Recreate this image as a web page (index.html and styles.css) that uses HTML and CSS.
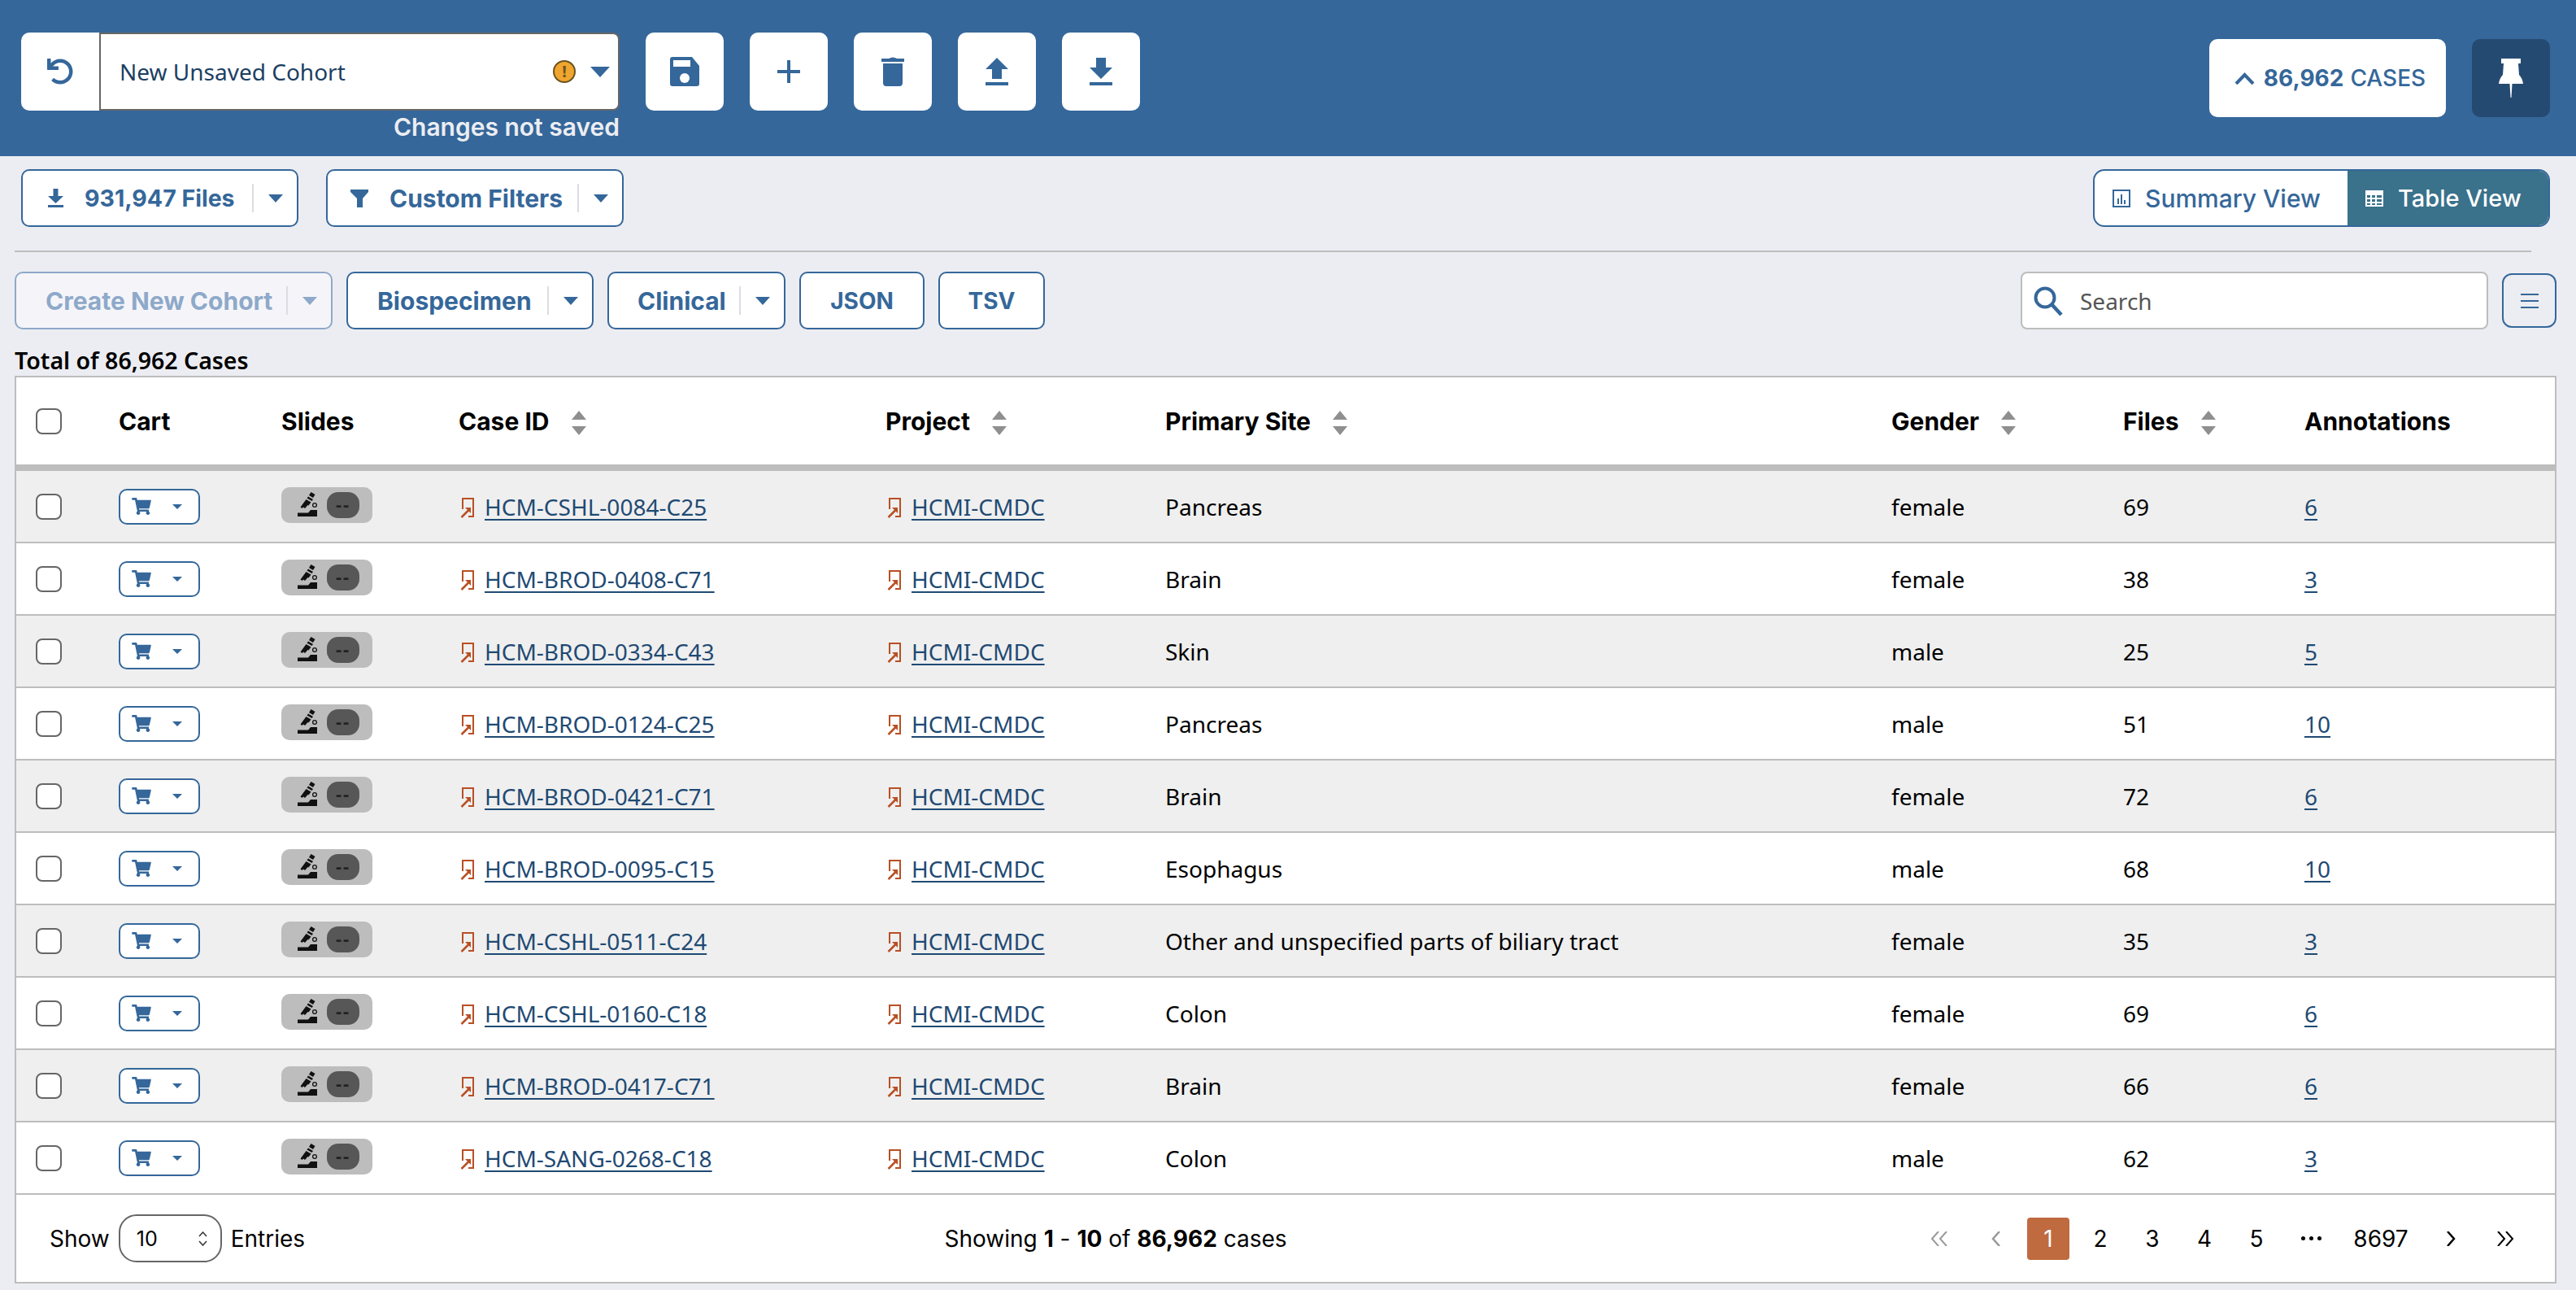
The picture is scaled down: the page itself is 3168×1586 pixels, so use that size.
FILE: index.html
```html
<!doctype html>
<html>
<head>
	<meta charset="utf-8">
	<title>Cohort Case Table</title>
	<link rel="stylesheet" href="styles.css">
</head>
<body>

<svg class="defs" width="0" height="0">
	<symbol id="i-cart" viewBox="0 0 576 512"><path d="M528.12 301.319l47.273-208C578.806 78.301 567.391 64 551.99 64H159.208l-9.166-44.81C147.758 8.021 137.93 0 126.529 0H24C10.745 0 0 10.745 0 24v16c0 13.255 10.745 24 24 24h69.883l70.248 343.435C147.325 417.1 136 435.222 136 456c0 30.928 25.072 56 56 56s56-25.072 56-56c0-15.674-6.447-29.835-16.824-40h209.647C430.447 426.165 424 440.326 424 456c0 30.928 25.072 56 56 56s56-25.072 56-56c0-22.172-12.888-41.332-31.579-50.405l5.517-24.276c3.413-15.018-8.002-29.319-23.403-29.319H218.117l-6.545-32h293.145c11.206 0 20.92-7.754 23.403-18.681z"/></symbol>
	<symbol id="i-scope" viewBox="0 0 24 30">
		<path d="M0 30v-4.500h13l3-3.500h8v8z"/>
		<path d="M3.500 18.500l7-9.500 6 3.500-3 4-1-.5-3.500 4-2-1.500-1.500 1.500z"/>
		<path d="M11.500 7.500l1.500-2 6 3.500-1.500 2z"/>
		<path d="M14 4l2.500-4 5 3-2.500 4z"/>
		<circle cx="21" cy="16" r="2.400" fill="#bdbdbd" stroke="#111" stroke-width="1.300"/>
	</symbol>
	<symbol id="i-link" viewBox="0 0 18 26">
		<path d="M3 15V2h13v22H10" fill="none" stroke="currentColor" stroke-width="2"/>
		<path d="M1.500 25l9.500-9.500" fill="none" stroke="currentColor" stroke-width="2.500"/>
		<path d="M6 13h7v7z"/>
	</symbol>
	<symbol id="i-sort" viewBox="0 0 18 30">
		<path d="M9 0l9 11H0zM0 19h18l-9 11z"/>
	</symbol>
	<symbol id="i-first" viewBox="0 0 22 18"><path d="M10 0L2 9l8 9M20 0l-8 9 8 9" fill="none" stroke="currentColor" stroke-width="2"/></symbol>
	<symbol id="i-prev" viewBox="0 0 12 18"><path d="M10 0L2 9l8 9" fill="none" stroke="currentColor" stroke-width="2.500"/></symbol>
	<symbol id="i-next" viewBox="0 0 12 18"><path d="M2 0l8 9-8 9" fill="none" stroke="currentColor" stroke-width="2.500"/></symbol>
	<symbol id="i-last" viewBox="0 0 22 18"><path d="M2 0l8 9-8 9M12 0l8 9-8 9" fill="none" stroke="currentColor" stroke-width="2"/></symbol>
</svg>

<!--cohort bar start-->
<div class="cohort_bar">
	<button class="tile tile_undo">
		<svg width="32" height="32" viewBox="0 0 512 512"><path d="M212.333 224.333H12c-6.627 0-12-5.373-12-12V12C0 5.373 5.373 0 12 0h48c6.627 0 12 5.373 12 12v78.112C117.773 39.279 184.26 7.47 258.175 8.007c136.906.994 246.448 111.623 246.157 248.532C504.041 393.258 393.12 504 256.333 504c-64.089 0-122.496-24.313-166.51-64.215-5.099-4.622-5.334-12.554-.467-17.42l33.967-33.967c4.474-4.474 11.662-4.717 16.401-.525C170.76 415.336 211.58 432 256.333 432c97.268 0 176-78.716 176-176 0-97.267-78.716-176-176-176-58.496 0-110.28 28.476-142.274 72.333h98.274c6.627 0 12 5.373 12 12v48c0 6.627-5.373 12-12 12z"/></svg>
	</button>
	<div class="cohort_pick">
		<div class="cohort_select">
			<span class="cohort_name">New Unsaved Cohort</span>
			<span class="warn">!</span>
			<span class="caret caret_big"></span>
		</div>
		<div class="cohort_note">Changes not saved</div>
	</div>
	<div class="tile_group">
		<button class="tile">
			<svg width="36" height="36" viewBox="0 0 36 36"><path d="M3 0h24l9 11v22a3 3 0 0 1-3 3H3a3 3 0 0 1-3-3V3a3 3 0 0 1 3-3z"/><rect x="4" y="4" width="21" height="8" fill="#fff"/><circle cx="18" cy="26" r="6" fill="#fff"/></svg>
		</button>
		<button class="tile">
			<svg width="28" height="28" viewBox="0 0 28 28"><path d="M12 0h4v12h12v4H16v12h-4V16H0v-4h12z"/></svg>
		</button>
		<button class="tile">
			<svg width="28" height="36" viewBox="0 0 28 36"><path d="M0 2h9q5-3 10 0h9v4H0zM2 8h24v24a4 4 0 0 1-4 4H6a4 4 0 0 1-4-4z"/></svg>
		</button>
		<button class="tile">
			<svg width="28" height="34" viewBox="0 0 28 34"><path d="M14 0l14 14h-8v12H8V14H0zM0 30h28v4H0z"/></svg>
		</button>
		<button class="tile">
			<svg width="28" height="34" viewBox="0 0 28 34"><path d="M8 0h12v12h8L14 26 0 12h8zM0 30h28v4H0z"/></svg>
		</button>
	</div>
	<div class="bar_right">
		<button class="cases_btn">
			<svg width="25" height="15" viewBox="0 0 25 15"><path d="M2 14L12.500 3 23 14" fill="none" stroke="currentColor" stroke-width="4"/></svg>
			<b>86,962</b> <span>CASES</span>
		</button>
		<button class="pin_btn">
			<svg width="30" height="48" viewBox="0 0 30 48"><path d="M3 0h24v6h-3l1 14q4 4 5 11H16.500L15.500 48H14.500L13.500 31H0q1-7 5-11L6 6H3z"/></svg>
		</button>
	</div>
</div>
<!--end cohort bar-->

<div class="page">

	<div class="view_row">
		<button class="btn w_files">
			<svg class="btn_icon" width="19" height="23" viewBox="0 0 19 23"><path d="M6.500 0h6v9H19l-9.500 9L0 9h6.500zM0 20h19v3H0z"/></svg>
			<span class="btn_label">931,947 Files</span>
			<span class="btn_line"></span>
			<span class="caret_box"><span class="caret"></span></span>
		</button>
		<button class="btn w_filters">
			<svg class="btn_icon" width="22" height="22" viewBox="0 0 22 22"><path d="M0 0h22v3l-7 8v11H8V11L0 3z"/></svg>
			<span class="btn_label">Custom Filters</span>
			<span class="btn_line"></span>
			<span class="caret_box"><span class="caret"></span></span>
		</button>
		<div class="view_switch">
			<div class="view_item">
				<svg width="22" height="22" viewBox="0 0 22 22"><rect x="1" y="1" width="20" height="20" fill="none" stroke="currentColor" stroke-width="2"/><path d="M6 11h2v7H6zM10 6h2v12h-2zM14 13h2v5h-2z"/></svg>
				Summary View
			</div>
			<div class="view_item view_on">
				<svg width="22" height="22" viewBox="0 0 22 22"><path d="M0 1h22v20H0z"/><path d="M2 7h4v3H2zM8 7h4v3H8zM14 7h6v3h-6zM2 12h4v3H2zM8 12h4v3H8zM14 12h6v3h-6zM2 17h4v2H2zM8 17h4v2H8zM14 17h6v2h-6z" fill="#3a718b"/></svg>
				Table View
			</div>
		</div>
	</div>

	<div class="rule"></div>

	<div class="tool_row">
		<button class="btn w_create btn_off">
			<span class="btn_label">Create New Cohort</span>
			<span class="btn_line"></span>
			<span class="caret_box"><span class="caret"></span></span>
		</button>
		<button class="btn w_bio">
			<span class="btn_label">Biospecimen</span>
			<span class="btn_line"></span>
			<span class="caret_box"><span class="caret"></span></span>
		</button>
		<button class="btn w_clin">
			<span class="btn_label">Clinical</span>
			<span class="btn_line"></span>
			<span class="caret_box"><span class="caret"></span></span>
		</button>
		<button class="btn w_json">JSON</button>
		<button class="btn w_tsv">TSV</button>
		<div class="search">
			<svg width="36" height="36" viewBox="0 0 36 36"><circle cx="14" cy="14" r="11.500" fill="none" stroke="currentColor" stroke-width="4"/><path d="M22 22l12 13" fill="none" stroke="currentColor" stroke-width="4.500"/></svg>
			<span>Search</span>
		</div>
		<button class="col_btn">
			<svg width="22" height="18" viewBox="0 0 22 18"><path d="M0 0h22v2H0zM0 8h22v2H0zM0 16h22v2H0z"/></svg>
		</button>
	</div>

	<div class="total">Total of 86,962 Cases</div>

	<!--table start-->
	<div class="grid">
		<table>
			<colgroup>
				<col class="c1"><col class="c2"><col class="c3"><col class="c4"><col class="c5"><col class="c6"><col class="c7"><col class="c8"><col class="c9">
			</colgroup>
			<thead>
				<tr>
					<th><span class="check"></span></th>
					<th>Cart</th>
					<th>Slides</th>
					<th>Case ID <svg class="sort"><use href="#i-sort"/></svg></th>
					<th>Project <svg class="sort"><use href="#i-sort"/></svg></th>
					<th>Primary Site <svg class="sort"><use href="#i-sort"/></svg></th>
					<th>Gender <svg class="sort"><use href="#i-sort"/></svg></th>
					<th>Files <svg class="sort"><use href="#i-sort"/></svg></th>
					<th>Annotations</th>
				</tr>
			</thead>
			<tbody>
				<tr>
					<td><span class="check"></span></td>
					<td><span class="cart"><svg width="24" height="21"><use href="#i-cart"/></svg><span class="caret caret_sm"></span></span></td>
					<td><span class="slides"><svg width="24" height="30"><use href="#i-scope"/></svg><span class="slides_n">--</span></span></td>
					<td><a class="ref"><svg width="18" height="26"><use href="#i-link"/></svg><u>HCM-CSHL-0084-C25</u></a></td>
					<td><a class="ref"><svg width="18" height="26"><use href="#i-link"/></svg><u>HCMI-CMDC</u></a></td>
					<td>Pancreas</td>
					<td>female</td>
					<td>69</td>
					<td><u>6</u></td>
				</tr>
				<tr>
					<td><span class="check"></span></td>
					<td><span class="cart"><svg width="24" height="21"><use href="#i-cart"/></svg><span class="caret caret_sm"></span></span></td>
					<td><span class="slides"><svg width="24" height="30"><use href="#i-scope"/></svg><span class="slides_n">--</span></span></td>
					<td><a class="ref"><svg width="18" height="26"><use href="#i-link"/></svg><u>HCM-BROD-0408-C71</u></a></td>
					<td><a class="ref"><svg width="18" height="26"><use href="#i-link"/></svg><u>HCMI-CMDC</u></a></td>
					<td>Brain</td>
					<td>female</td>
					<td>38</td>
					<td><u>3</u></td>
				</tr>
				<tr>
					<td><span class="check"></span></td>
					<td><span class="cart"><svg width="24" height="21"><use href="#i-cart"/></svg><span class="caret caret_sm"></span></span></td>
					<td><span class="slides"><svg width="24" height="30"><use href="#i-scope"/></svg><span class="slides_n">--</span></span></td>
					<td><a class="ref"><svg width="18" height="26"><use href="#i-link"/></svg><u>HCM-BROD-0334-C43</u></a></td>
					<td><a class="ref"><svg width="18" height="26"><use href="#i-link"/></svg><u>HCMI-CMDC</u></a></td>
					<td>Skin</td>
					<td>male</td>
					<td>25</td>
					<td><u>5</u></td>
				</tr>
				<tr>
					<td><span class="check"></span></td>
					<td><span class="cart"><svg width="24" height="21"><use href="#i-cart"/></svg><span class="caret caret_sm"></span></span></td>
					<td><span class="slides"><svg width="24" height="30"><use href="#i-scope"/></svg><span class="slides_n">--</span></span></td>
					<td><a class="ref"><svg width="18" height="26"><use href="#i-link"/></svg><u>HCM-BROD-0124-C25</u></a></td>
					<td><a class="ref"><svg width="18" height="26"><use href="#i-link"/></svg><u>HCMI-CMDC</u></a></td>
					<td>Pancreas</td>
					<td>male</td>
					<td>51</td>
					<td><u>10</u></td>
				</tr>
				<tr>
					<td><span class="check"></span></td>
					<td><span class="cart"><svg width="24" height="21"><use href="#i-cart"/></svg><span class="caret caret_sm"></span></span></td>
					<td><span class="slides"><svg width="24" height="30"><use href="#i-scope"/></svg><span class="slides_n">--</span></span></td>
					<td><a class="ref"><svg width="18" height="26"><use href="#i-link"/></svg><u>HCM-BROD-0421-C71</u></a></td>
					<td><a class="ref"><svg width="18" height="26"><use href="#i-link"/></svg><u>HCMI-CMDC</u></a></td>
					<td>Brain</td>
					<td>female</td>
					<td>72</td>
					<td><u>6</u></td>
				</tr>
				<tr>
					<td><span class="check"></span></td>
					<td><span class="cart"><svg width="24" height="21"><use href="#i-cart"/></svg><span class="caret caret_sm"></span></span></td>
					<td><span class="slides"><svg width="24" height="30"><use href="#i-scope"/></svg><span class="slides_n">--</span></span></td>
					<td><a class="ref"><svg width="18" height="26"><use href="#i-link"/></svg><u>HCM-BROD-0095-C15</u></a></td>
					<td><a class="ref"><svg width="18" height="26"><use href="#i-link"/></svg><u>HCMI-CMDC</u></a></td>
					<td>Esophagus</td>
					<td>male</td>
					<td>68</td>
					<td><u>10</u></td>
				</tr>
				<tr>
					<td><span class="check"></span></td>
					<td><span class="cart"><svg width="24" height="21"><use href="#i-cart"/></svg><span class="caret caret_sm"></span></span></td>
					<td><span class="slides"><svg width="24" height="30"><use href="#i-scope"/></svg><span class="slides_n">--</span></span></td>
					<td><a class="ref"><svg width="18" height="26"><use href="#i-link"/></svg><u>HCM-CSHL-0511-C24</u></a></td>
					<td><a class="ref"><svg width="18" height="26"><use href="#i-link"/></svg><u>HCMI-CMDC</u></a></td>
					<td>Other and unspecified parts of biliary tract</td>
					<td>female</td>
					<td>35</td>
					<td><u>3</u></td>
				</tr>
				<tr>
					<td><span class="check"></span></td>
					<td><span class="cart"><svg width="24" height="21"><use href="#i-cart"/></svg><span class="caret caret_sm"></span></span></td>
					<td><span class="slides"><svg width="24" height="30"><use href="#i-scope"/></svg><span class="slides_n">--</span></span></td>
					<td><a class="ref"><svg width="18" height="26"><use href="#i-link"/></svg><u>HCM-CSHL-0160-C18</u></a></td>
					<td><a class="ref"><svg width="18" height="26"><use href="#i-link"/></svg><u>HCMI-CMDC</u></a></td>
					<td>Colon</td>
					<td>female</td>
					<td>69</td>
					<td><u>6</u></td>
				</tr>
				<tr>
					<td><span class="check"></span></td>
					<td><span class="cart"><svg width="24" height="21"><use href="#i-cart"/></svg><span class="caret caret_sm"></span></span></td>
					<td><span class="slides"><svg width="24" height="30"><use href="#i-scope"/></svg><span class="slides_n">--</span></span></td>
					<td><a class="ref"><svg width="18" height="26"><use href="#i-link"/></svg><u>HCM-BROD-0417-C71</u></a></td>
					<td><a class="ref"><svg width="18" height="26"><use href="#i-link"/></svg><u>HCMI-CMDC</u></a></td>
					<td>Brain</td>
					<td>female</td>
					<td>66</td>
					<td><u>6</u></td>
				</tr>
				<tr>
					<td><span class="check"></span></td>
					<td><span class="cart"><svg width="24" height="21"><use href="#i-cart"/></svg><span class="caret caret_sm"></span></span></td>
					<td><span class="slides"><svg width="24" height="30"><use href="#i-scope"/></svg><span class="slides_n">--</span></span></td>
					<td><a class="ref"><svg width="18" height="26"><use href="#i-link"/></svg><u>HCM-SANG-0268-C18</u></a></td>
					<td><a class="ref"><svg width="18" height="26"><use href="#i-link"/></svg><u>HCMI-CMDC</u></a></td>
					<td>Colon</td>
					<td>male</td>
					<td>62</td>
					<td><u>3</u></td>
				</tr>
			</tbody>
		</table>

		<div class="grid_foot">
			<div class="entries">
				Show
				<span class="entries_box">10
					<svg width="11" height="18" viewBox="0 0 11 18"><path d="M1 6l4.500-5L10 6M1 12l4.500 5 4.500-5" fill="none" stroke="#333" stroke-width="1.500"/></svg>
				</span>
				Entries
			</div>
			<div class="showing">Showing <b>1</b> - <b>10</b> of <b>86,962</b> cases</div>
			<div class="pager">
				<span class="pg pg_off pg_first"><svg width="22" height="18"><use href="#i-first"/></svg></span>
				<span class="pg pg_off"><svg width="12" height="18"><use href="#i-prev"/></svg></span>
				<span class="pg pg_on">1</span>
				<span class="pg">2</span>
				<span class="pg">3</span>
				<span class="pg">4</span>
				<span class="pg">5</span>
				<span class="pg pg_dots"><svg width="25" height="5" viewBox="0 0 25 5"><circle cx="2.500" cy="2.500" r="2.500"/><circle cx="12.500" cy="2.500" r="2.500"/><circle cx="22.500" cy="2.500" r="2.500"/></svg></span>
				<span class="pg pg_wide">8697</span>
				<span class="pg"><svg width="12" height="18"><use href="#i-next"/></svg></span>
				<span class="pg pg_last"><svg width="22" height="18"><use href="#i-last"/></svg></span>
			</div>
		</div>
	</div>
	<!--end table-->

</div>

</body>
</html>
```

FILE: styles.css
```css
*{margin:0;padding:0;box-sizing:border-box;}
html,body{height:1586px;overflow:hidden;}
body{background:#ecedf2;font-family:"Noto Sans","Open Sans",sans-serif;font-size:28px;color:#000;}
button{font-family:inherit;border:none;background:none;color:inherit;}
svg{fill:currentColor;display:block;flex:none;}
.defs{position:absolute;}

/*cohort bar start*/
.cohort_bar{height:192px;background:#35679a;display:flex;align-items:flex-start;padding:40px 32px 0 26px;}
.tile{width:96px;height:96px;background:#fff;border-radius:10px;display:flex;align-items:center;justify-content:center;color:#35679a;}
.tile_undo{border-radius:10px 0 0 10px;}
.cohort_pick{width:640px;}
.cohort_select{height:96px;background:#fff;border:2px solid #666;border-radius:0 8px 8px 0;display:flex;align-items:center;padding:0 10px 0 23px;color:#1c3f63;}
.cohort_name{flex:1;}
.warn{width:28px;height:28px;border-radius:50%;background:#f0a52e;border:2px solid #6b5420;color:#6b5420;font-size:20px;font-weight:700;line-height:24px;text-align:center;margin-right:18px;}
.cohort_note{font-family:"Inter","Noto Sans",sans-serif;font-weight:600;color:#ecedf2;text-align:right;font-size:30px;line-height:32px;margin-top:4px;}
.tile_group{display:flex;gap:32px;margin-left:32px;}
.bar_right{margin-left:auto;margin-top:8px;display:flex;gap:32px;}
.cases_btn{width:291px;height:96px;background:#fff;border-radius:10px;color:#35679a;display:flex;align-items:center;justify-content:center;gap:11px;padding-left:6px;font-family:"Inter","Noto Sans",sans-serif;font-size:28px;}
.cases_btn b{font-weight:700;}
.cases_btn span{font-weight:500;margin-left:-3px;}
.pin_btn{width:96px;height:96px;background:#254a72;border-radius:10px;color:#fff;display:flex;align-items:center;justify-content:center;}
/*end cohort bar*/

.caret{display:block;width:0;height:0;border-left:9px solid transparent;border-right:9px solid transparent;border-top:10px solid #35679a;}
.caret_big{border-left-width:12px;border-right-width:12px;border-top-width:13px;}
.caret_sm{border-left-width:6px;border-right-width:6px;border-top-width:6px;}

.page{padding:0 24px 0 18px;}

/*buttons*/
.btn{height:71px;background:#fff;border:2.500px solid #35679a;border-radius:10px;color:#35679a;display:flex;align-items:center;font-family:"Inter","Noto Sans",sans-serif;font-weight:700;font-size:30px;justify-content:center;flex:none;}
.btn_label{flex:1;text-align:left;white-space:nowrap;}
.btn_line{width:2px;height:35px;background:#dcdde2;}
.caret_box{width:53px;display:flex;justify-content:center;}
.btn_icon{margin-right:26px;}
.btn_off{background:#f5f5f9;border-color:#8ea9c9;color:#8ea9c9;}
.btn_off .caret{border-top-color:#8ea9c9;}
.w_files{width:341px;padding-left:31px;font-size:28.500px;}
.w_filters{width:366px;padding-left:28px;}
.w_create{width:391px;padding-left:36px;}
.w_bio{width:304px;padding-left:36px;}
.w_clin{width:219px;padding-left:35px;}
.w_json{width:154px;font-size:28px;}
.w_tsv{width:131px;font-size:28px;}

.view_row{display:flex;align-items:center;gap:34px;padding:16px 8px 0;}
.view_switch{margin-left:auto;width:562px;height:71px;display:flex;border:2.500px solid #35679a;border-radius:14px;overflow:hidden;background:#fff;font-family:"Inter","Noto Sans",sans-serif;font-weight:500;font-size:30px;color:#35679a;}
.view_item{display:flex;align-items:center;gap:18px;padding-left:22px;width:311px;}
.view_on{flex:1;background:#3a718b;color:#fff;font-size:29px;}
.rule{height:2px;background:#bdbdbd;margin:29px 31px 0 0;}
.tool_row{display:flex;align-items:center;gap:17px;margin-top:24px;}
.search{margin-left:auto;width:575px;height:71px;background:#fff;border:2px solid #bdbdbd;border-radius:8px;display:flex;align-items:center;gap:21px;padding-left:14px;color:#555;}
.search svg{color:#35679a;}
.col_btn{width:67px;height:67px;border:2px solid #35679a;border-radius:12px;display:flex;align-items:center;justify-content:center;color:#35679a;}
.total{font-weight:600;font-size:28.500px;height:57px;line-height:76px;}

/*table start*/
.grid{background:#fff;border:2px solid #bdbdbd;}
table{width:100%;table-layout:fixed;border-collapse:separate;border-spacing:0;}
.c1{width:126px;}
.c2{width:200px;}
.c3{width:218px;}
.c4{width:525px;}
.c5{width:344px;}
.c6{width:893px;}
.c7{width:285px;}
.c8{width:223px;}
th{height:115px;border-bottom:8px solid #bdbdbd;text-align:left;font-family:"Inter","Noto Sans",sans-serif;font-weight:700;font-size:30px;white-space:nowrap;}
th:first-child,td:first-child{padding-left:24px;}
.sort{display:inline-block;width:18px;height:30px;color:#8f8f8f;margin-left:20px;vertical-align:middle;}
td{height:89px;border-bottom:2px solid #bdbdbd;white-space:nowrap;}
tbody tr:nth-child(odd) td{background:#efefef;}
td u{color:#1f4a73;text-decoration-thickness:2px;text-underline-offset:4px;}
.check{display:block;width:32px;height:32px;border:2.500px solid #666;border-radius:8px;background:#fff;}
.cart{width:100px;height:44px;border:2.500px solid #35679a;border-radius:10px;background:#fff;color:#35679a;display:flex;align-items:center;gap:26px;padding-left:14px;}
.slides{width:112px;height:44px;background:#bdbdbd;border-radius:10px;display:flex;align-items:center;gap:12px;padding-left:20px;color:#111;margin-bottom:4px;}
.slides svg{margin-top:-2px;}
.slides_n{width:40px;height:32px;background:#575757;border-radius:14px;text-align:center;font-size:22px;font-weight:700;line-height:29px;letter-spacing:2px;color:#222;}
.ref{display:flex;align-items:center;gap:12px;}
.ref svg{color:#b94f24;margin-top:2px;margin-left:2px;}
.grid_foot{height:107px;display:flex;align-items:center;justify-content:space-between;padding:0 35px 0 40px;font-family:"Inter","Noto Sans",sans-serif;}
.entries{display:flex;align-items:center;gap:11px;margin-left:1px;}
.entries_box{width:127px;height:59px;border:2px solid #666;border-radius:22px;display:flex;align-items:center;justify-content:space-between;padding:0 16px 0 20px;font-size:25px;}
.showing{margin-left:10px;}
.showing b{font-weight:700;}
.pager{display:flex;align-items:center;gap:12px;}
.pg{width:52px;height:52px;border-radius:4px;display:flex;align-items:center;justify-content:center;}
.pg_off{color:#999;}
.pg_first{margin-right:6px;}
.pg_on{background:#c06a40;color:#fff;}
.pg_dots{margin-left:3px;}
.pg_wide{width:96px;}
.pg_last{margin-left:3px;}
/*end table*/
```
